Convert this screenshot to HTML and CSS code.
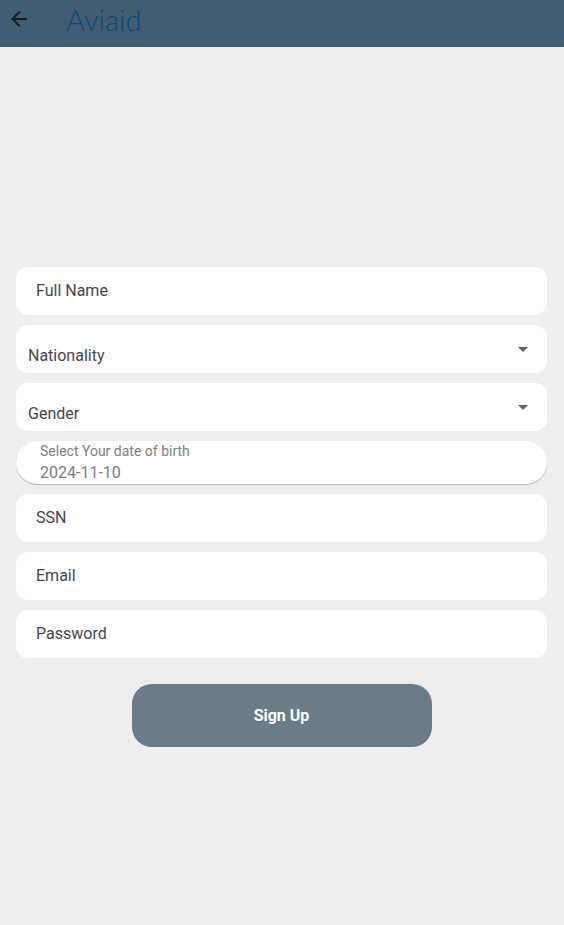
FILE: index.html
```html
<!DOCTYPE html>
<html lang="en">
<head>
<meta charset="utf-8">
<meta name="viewport" content="width=device-width, initial-scale=1">
<title>Sign Up</title>
<link rel="stylesheet" href="styles.css">
</head>
<body>
<header class="bar">
  <button class="back" type="button" aria-label="Back">
    <svg width="24" height="24" viewBox="0 0 24 24" aria-hidden="true"><path fill="currentColor" d="M20 11H7.83l5.59-5.59L12 4l-8 8 8 8 1.41-1.41L7.83 13H20v-2z"/></svg>
  </button>
  <span class="logo">Aviaid</span>
</header>
<main>
  <form class="form">
    <input class="field" type="text" placeholder="Full Name" aria-label="Full Name">
    <div class="picker">
      <select class="field choice" aria-label="Nationality"><option>Nationality</option></select>
      <svg class="caret" width="24" height="24" viewBox="0 0 24 24" aria-hidden="true"><path fill="currentColor" d="M7 10l5 5 5-5z"/></svg>
    </div>
    <div class="picker">
      <select class="field choice" aria-label="Gender"><option>Gender</option></select>
      <svg class="caret" width="24" height="24" viewBox="0 0 24 24" aria-hidden="true"><path fill="currentColor" d="M7 10l5 5 5-5z"/></svg>
    </div>
    <div class="date">
      <label class="date-label" for="birth">Select Your date of birth</label>
      <input class="date-value" id="birth" type="text" value="2024-11-10">
    </div>
    <input class="field" type="text" placeholder="SSN" aria-label="SSN">
    <input class="field" type="email" placeholder="Email" aria-label="Email">
    <input class="field" type="password" placeholder="Password" aria-label="Password">
    <button class="submit" type="submit">Sign Up</button>
  </form>
</main>
</body>
</html>
```

FILE: styles.css
```css
* { box-sizing: border-box; }

body {
  margin: 0;
  background: #eeeeee;
  color: #49454f;
  font: 16px/24px Roboto, sans-serif;
}

input, select, button {
  font: inherit;
  color: inherit;
  border: 0;
}

.bar {
  display: flex;
  align-items: flex-start;
  gap: 35px;
  height: 47px;
  padding: 3px 7px;
  background: #445e71;
}

.back {
  display: flex;
  margin-top: 4px;
  padding: 0;
  background: none;
  color: #1d1b20;
}

.logo {
  color: #064b78;
  font: 300 29px/34px Lato, sans-serif;
}

.form {
  display: flex;
  flex-direction: column;
  gap: 10px;
  padding: 220px 17px 16px 16px;
}

.field {
  width: 100%;
  height: 48px;
  padding: 0 20px 2px;
  border-radius: 12px;
  background: #ffffff;
}

.field::placeholder {
  color: #49454f;
  opacity: 1;
}

.picker {
  display: grid;
  align-items: center;
}

.picker > * { grid-area: 1 / 1; }

.choice {
  appearance: none;
  padding: 14px 12px 0;
}

.caret {
  justify-self: end;
  margin-right: 12px;
  color: #616161;
  pointer-events: none;
}

.date {
  display: flex;
  flex-direction: column;
  height: 43px;
  padding: 0 24px;
  border-radius: 22px;
  background: #ffffff;
  box-shadow: 0 1px 1px #b4b4b4;
  color: #808080;
}

.date-label {
  flex: none;
  font-size: 14px;
  line-height: 20px;
}

.date-value {
  flex: none;
  width: 100%;
  height: 24px;
  padding: 0;
  background: none;
}

.submit {
  align-self: center;
  width: 300px;
  max-width: 100%;
  height: 63px;
  margin-top: 16px;
  border-radius: 20px;
  background: #6b7b87;
  color: #ffffff;
  font-weight: 700;
}
```
